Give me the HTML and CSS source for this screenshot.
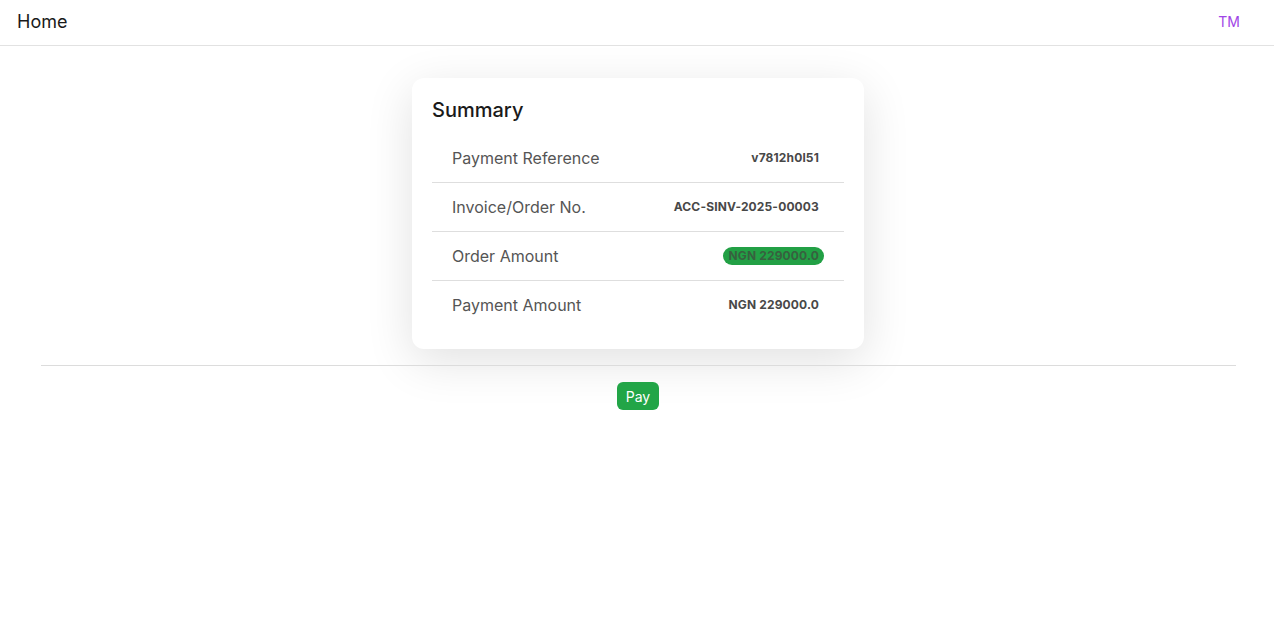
FILE: index.html
```html
<!DOCTYPE html>
<html>
<head>
<meta charset="utf-8">
<link rel="stylesheet" href="styles.css">
</head>
<body>
<header class="topbar">
  <div class="brand">Home</div>
  <div class="avatar">TM</div>
</header>
<main class="page">
  <section class="card">
    <h2 class="card-title">Summary</h2>
    <div class="rows">
      <div class="row"><span class="label">Payment Reference</span><span class="value">v7812h0l51</span></div>
      <div class="row"><span class="label">Invoice/Order No.</span><span class="value">ACC-SINV-2025-00003</span></div>
      <div class="row"><span class="label">Order Amount</span><span class="value badge">NGN 229000.0</span></div>
      <div class="row"><span class="label">Payment Amount</span><span class="value">NGN 229000.0</span></div>
    </div>
  </section>
  <hr class="divider">
  <div class="actions"><button class="pay">Pay</button></div>
</main>
</body>
</html>
```
FILE: styles.css
```css
* { box-sizing: border-box; }
html, body { margin: 0; padding: 0; background: #fff; }
body { font-family: Inter, "Noto Sans", sans-serif; color: #1f1f1f; }
.topbar {
  height: 46px;
  border-bottom: 1px solid #e2e2e2;
  display: flex;
  align-items: center;
  justify-content: space-between;
  padding: 0 34px 3px 17px;
}
.brand { font-size: 18px; color: #1a1a1a; }
.avatar { font-size: 14px; color: #a045e6; font-weight: 400; }
.page { padding: 32px 38px 0 40px; display: flex; flex-direction: column; align-items: center; }
.card {
  width: 452px;
  background: #fff;
  border-radius: 12px;
  box-shadow: 0 12px 48px rgba(0,0,0,0.12);
  padding: 20px;
}
.card-title { margin: 0; font-size: 20px; font-weight: 500; line-height: 24px; color: #1a1a1a; }
.rows { margin-top: 12px; }
.row {
  height: 49px;
  display: flex;
  align-items: center;
  justify-content: space-between;
  padding: 0 20px;
  border-bottom: 1px solid #dedede;
}
.row:last-child { border-bottom: none; height: 48px; }
.label { font-size: 16px; color: #555; }
.value { font-size: 12px; font-weight: 700; color: #484848; padding: 0 5px; line-height: 18px; letter-spacing: 0.15px; }
.badge { background: #22a045; color: #37603f; border-radius: 9px; }
.divider { width: calc(100% - 1px); align-self: flex-end; border: none; border-top: 1px solid #dcdcdc; margin: 16px 0 0 0; }
.actions { margin-top: 16px; }
.pay {
  font-family: inherit;
  background: #22a547;
  color: #fff;
  border: none;
  border-radius: 6px;
  font-size: 14px;
  height: 28px;
  padding: 0 9px;
}
```
